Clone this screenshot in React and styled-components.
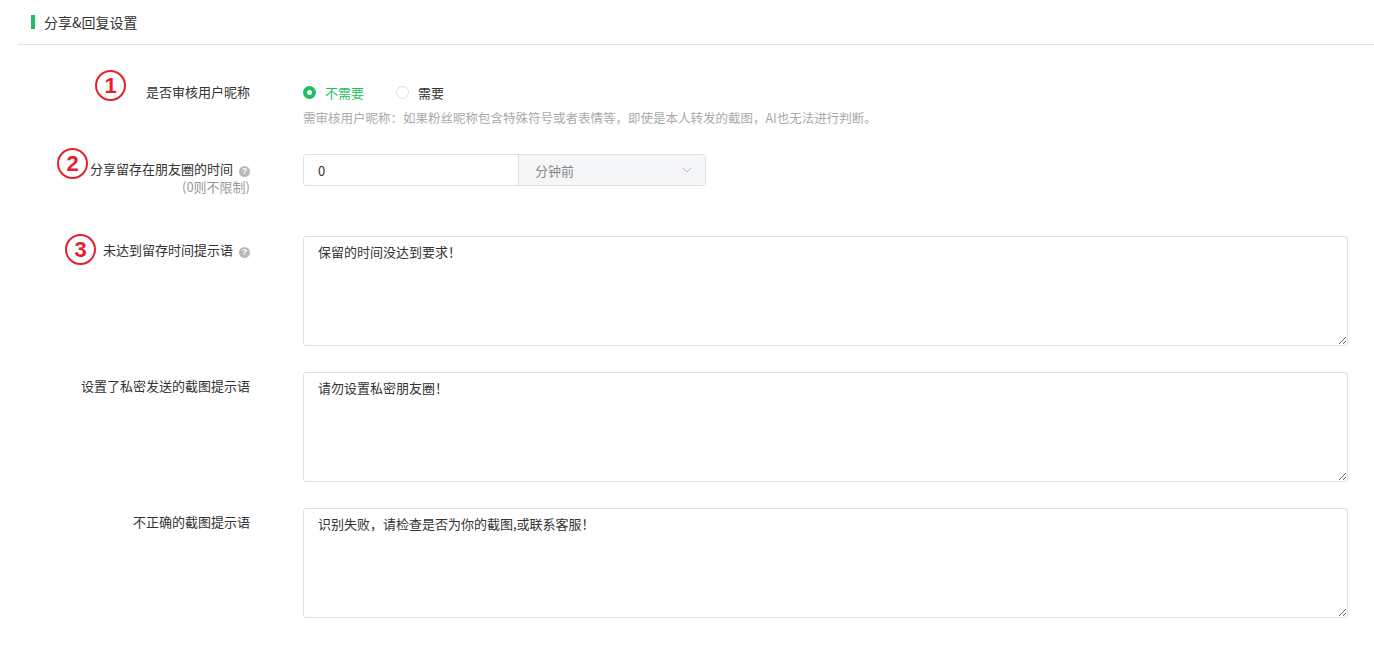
import React from 'react';
import styled, { createGlobalStyle } from 'styled-components';

const Global = createGlobalStyle`
  body { margin: 0; background: #fff; font-family: "Noto Sans CJK SC", "Noto Sans", sans-serif; font-size: 13px; color: #333; }
`;

const Page = styled.div`
  padding: 0 0 0 18px;
`;

const Header = styled.div`
  height: 44px;
  border-bottom: 1px solid #e4e6eb;
  display: flex;
  align-items: center;
  padding-left: 13px;
  font-size: 14px;
  color: #333;
  &::before {
    content: '';
    width: 4px;
    height: 14px;
    background: #1fbf5f;
    margin-right: 9px;
  }
`;

const Form = styled.div`
  padding-top: 38px;
  padding-right: 26px;
  display: flex;
  flex-direction: column;
`;

const Row = styled.div`
  display: flex;
  align-items: flex-start;
  margin-bottom: ${p => p.$gap}px;
`;

const Label = styled.div`
  width: 232px;
  flex-shrink: 0;
  text-align: right;
  padding-top: ${p => p.$top}px;
  position: relative;
  line-height: 18px;
`;

const Sub = styled.div`
  color: #999;
`;

const Help = styled.span`
  display: inline-block;
  width: 11px;
  height: 11px;
  border-radius: 50%;
  background: #b9b9b9;
  color: #fff;
  font-size: 9px;
  line-height: 11px;
  text-align: center;
  font-weight: bold;
  margin-left: 6px;
  vertical-align: 0;
  font-family: "Liberation Sans", sans-serif;
`;

const Mark = styled.span`
  position: absolute;
  left: ${p => p.$left}px;
  top: ${p => p.$top}px;
  width: 27px;
  height: 27px;
  border: 2.5px solid #e5202a;
  border-radius: 50%;
  color: #e5202a;
  font-family: "Liberation Sans", sans-serif;
  font-weight: bold;
  font-size: 22px;
  line-height: 27px;
  text-align: center;
`;

const Control = styled.div`
  margin-left: 53px;
  flex: 1;
`;

const Radios = styled.div`
  display: flex;
  gap: 32px;
  height: 18px;
  align-items: center;
`;

const Radio = styled.label`
  display: flex;
  align-items: center;
  gap: 9px;
  color: ${p => p.$on ? '#1fbf5f' : '#333'};
  &::before {
    content: '';
    box-sizing: border-box;
    width: 13px;
    height: 13px;
    border-radius: 50%;
    border: ${p => p.$on ? '4px solid #1fbf5f' : '1px solid #ddd'};
    background: #fff;
  }
`;

const Hint = styled.div`
  color: #aaa;
  margin-top: 7px;
  font-size: 12.5px;
`;

const Group = styled.div`
  display: flex;
  width: 403px;
  height: 32px;
  border: 1px solid #dcdfe6;
  border-radius: 3px;
  box-sizing: border-box;
`;

const NumInput = styled.div`
  width: 200px;
  border-right: 1px solid #dcdfe6;
  padding-left: 14px;
  display: flex;
  align-items: center;
`;

const Select = styled.div`
  flex: 1;
  background: #f5f6f8;
  color: #888;
  padding: 0 12px 0 16px;
  display: flex;
  align-items: center;
  justify-content: space-between;
`;

const Area = styled.textarea`
  display: block;
  box-sizing: border-box;
  width: 100%;
  height: 110px;
  border: 1px solid #dcdfe6;
  border-radius: 3px;
  padding: 5px 14px;
  font: inherit;
  color: #333;
  line-height: 20px;
  resize: vertical;
  outline: none;
`;

export default function App() {
  return (
    <Page>
      <Global />
      <Header>分享&amp;回复设置</Header>
      <Form>
        <Row $gap={27}>
          <Label $top={0}>
            <Mark $left={77} $top={-13}>1</Mark>是否审核用户昵称
          </Label>
          <Control>
            <Radios>
              <Radio $on>不需要</Radio>
              <Radio>需要</Radio>
            </Radios>
            <Hint>需审核用户昵称：如果粉丝昵称包含特殊符号或者表情等，即使是本人转发的截图，AI也无法进行判断。</Hint>
          </Control>
        </Row>
        <Row $gap={40}>
          <Label $top={6}>
            <Mark $left={39} $top={-6}>2</Mark>分享留存在朋友圈的时间<Help>?</Help>
            <Sub>(0则不限制)</Sub>
          </Label>
          <Control>
            <Group>
              <NumInput>0</NumInput>
              <Select>
                分钟前
                <svg width="12" height="12" viewBox="0 0 12 12"><path d="M2 4l4 4 4-4" fill="none" stroke="#bbb" strokeWidth="1" /></svg>
              </Select>
            </Group>
          </Control>
        </Row>
        <Row $gap={26}>
          <Label $top={5}>
            <Mark $left={47} $top={-2}>3</Mark>未达到留存时间提示语<Help>?</Help>
          </Label>
          <Control>
            <Area defaultValue="保留的时间没达到要求！" />
          </Control>
        </Row>
        <Row $gap={26}>
          <Label $top={5}>设置了私密发送的截图提示语</Label>
          <Control>
            <Area defaultValue="请勿设置私密朋友圈！" />
          </Control>
        </Row>
        <Row $gap={0}>
          <Label $top={5}>不正确的截图提示语</Label>
          <Control>
            <Area defaultValue="识别失败，请检查是否为你的截图,或联系客服！" />
          </Control>
        </Row>
      </Form>
    </Page>
  );
}
